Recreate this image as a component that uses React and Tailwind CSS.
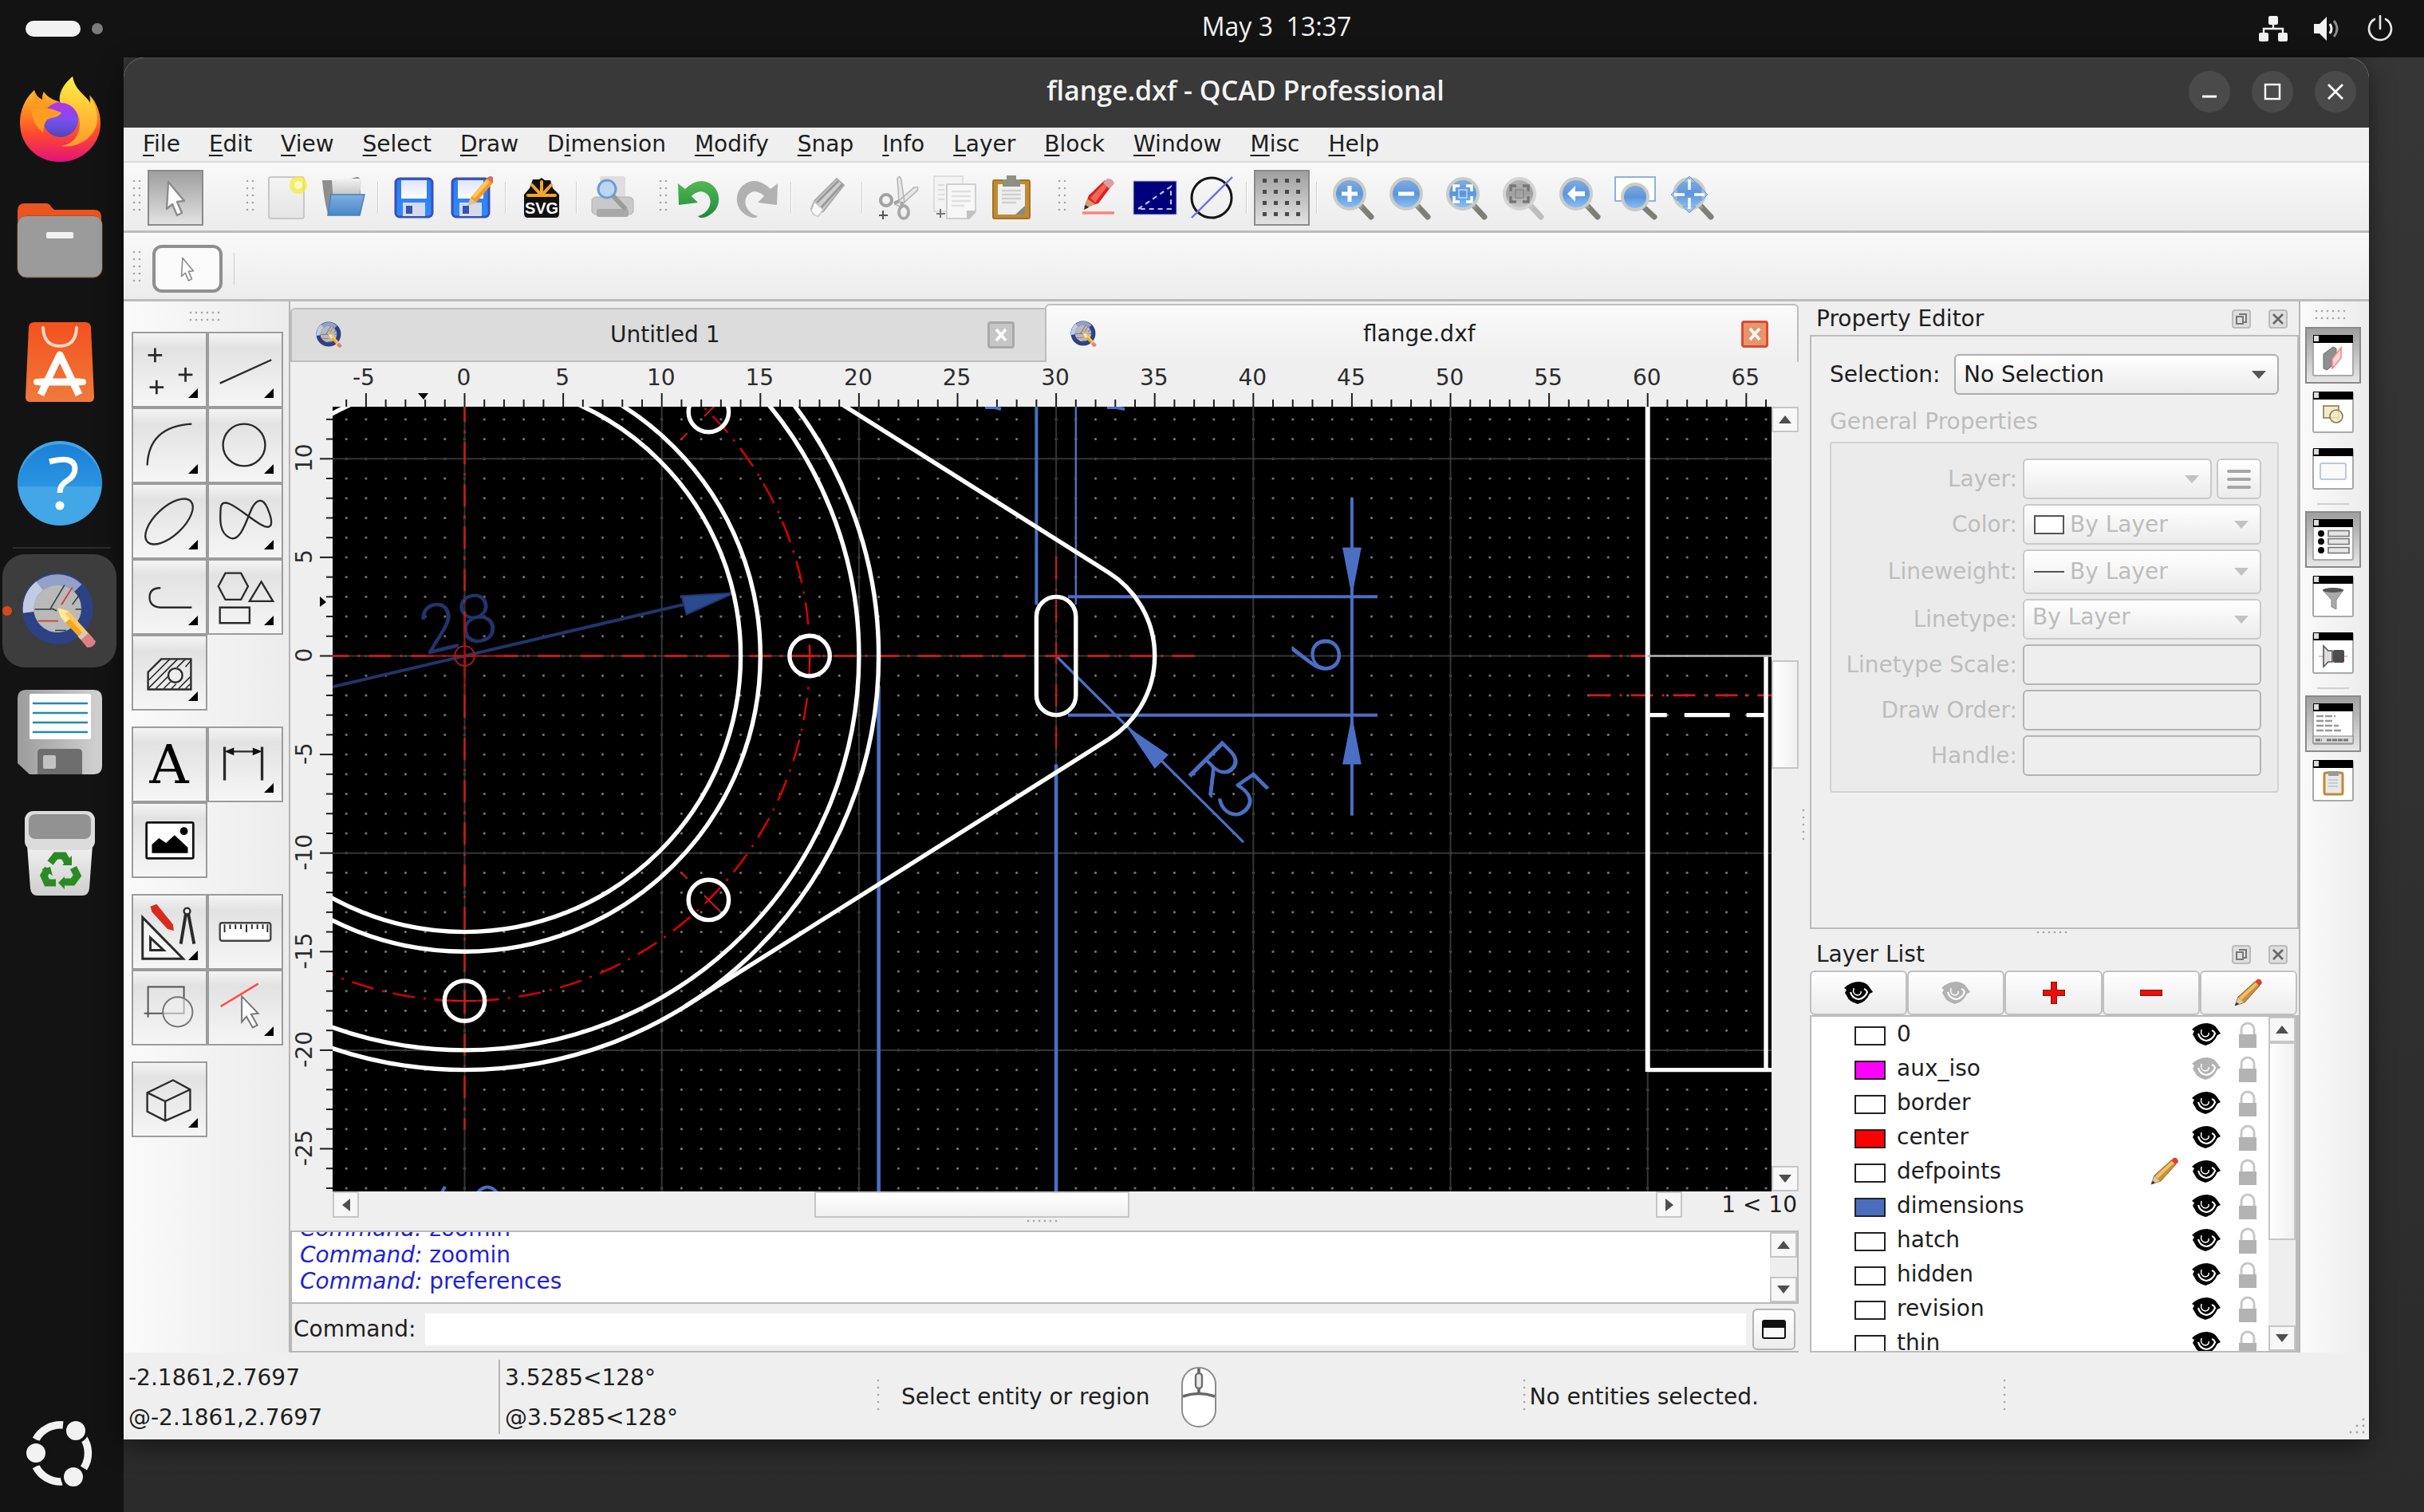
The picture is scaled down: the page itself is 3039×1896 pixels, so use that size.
import React from "react";

const FONT = "font-['DejaVu_Sans',sans-serif]";

/* ---------- shared bits ---------- */

function Grip({ vertical = true, cols = 2, rows = 5 }) {
  const w = vertical ? cols * 8 : rows * 8;
  const h = vertical ? rows * 10 : cols * 12;
  const nx = vertical ? cols : rows;
  const ny = vertical ? rows : cols;
  return (
    <svg width={w} height={h} className="shrink-0" aria-hidden="true">
      {Array.from({ length: nx * ny }, (_, i) => (
        <circle key={i} cx={3 + (i % nx) * 7} cy={4 + Math.floor(i / nx) * 9} r="1.3" fill="#a6a6a6" />
      ))}
    </svg>
  );
}

function Icon({ size = 56, box = 56, children, className = "" }) {
  return (
    <svg width={size} height={size} viewBox={`0 0 ${box} ${box}`} fill="none" className={className} aria-hidden="true">
      {children}
    </svg>
  );
}

function Gradients() {
  const lin = (id, stops, v = true) => (
    <linearGradient id={id} x1="0" y1="0" x2={v ? "0" : "1"} y2={v ? "1" : "0"}>
      {stops.map((s, i) => (
        <stop key={i} offset={i / (stops.length - 1)} stopColor={s} />
      ))}
    </linearGradient>
  );
  return (
    <svg width="0" height="0" className="absolute" aria-hidden="true">
      <defs>
        {lin("gPaper", ["#f4f4f4", "#e4e4e4"])}
        {lin("gFolder", ["#7fb0e0", "#4a86c8"])}
        {lin("gGrey", ["#f2f2f2", "#a8a8a8"])}
        {lin("gBlue", ["#2a7cf0", "#2f8bff"])}
        {lin("gLabel", ["#dfe4fb", "#ffffff"])}
        {lin("gLens", ["#86aee0", "#5b96dd", "#8fc2f7"])}
        {lin("gLensGrey", ["#b4b4b4", "#a0a0a0", "#cccccc"])}
        {lin("gUndo", ["#56b854", "#1c8a3c"])}
        {lin("gSoft", ["#f4511e", "#ef7a3c"])}
        {lin("gHelp", ["#1b80d8", "#2a95e2"])}
        {lin("gDisk", ["#9c9c9c", "#d2d2d2"], false)}
        {lin("gTrash", ["#f0f0f0", "#cfcfcf"])}
        {lin("gFox", ["#ffe14a", "#ff9a1f", "#ff4a2e", "#e3127b"])}
        {lin("gFox2", ["#fff04a", "#ffb52a"])}
        {lin("gPurple", ["#b833e1", "#7a4ff0", "#5045b8"])}
      </defs>
    </svg>
  );
}

/* ---------- top bar and dock ---------- */

function TopBar() {
  return (
    <header className="flex h-[72px] shrink-0 items-center justify-between bg-[#131313] pl-8 pr-[38px] text-[#f2f2f2]">
      <button aria-label="Workspaces" className="flex w-48 items-center gap-3.5">
        <span className="h-[20px] w-[69px] rounded-full bg-[#f2f2f2]" />
        <span className="size-3.5 rounded-full bg-[#7b7b7b]" />
      </button>
      <button className="whitespace-pre pb-1.5 pl-[168px] font-['Open_Sans',sans-serif] text-[32px] leading-none">May 3  13:37</button>
      <div className="flex w-48 items-center justify-end gap-[30px]">
        <svg width="38" height="34" viewBox="0 0 38 34" fill="#f2f2f2" role="img" aria-label="Network">
          <rect x="13" y="1" width="12" height="11" rx="2" />
          <rect x="1" y="22" width="12" height="11" rx="2" />
          <rect x="25" y="22" width="12" height="11" rx="2" />
          <path d="M19 10v7M7 23v-6h24v6" stroke="#f2f2f2" strokeWidth="2.4" fill="none" />
        </svg>
        <svg width="38" height="34" viewBox="0 0 38 34" fill="none" role="img" aria-label="Volume">
          <path d="M2 11h7l9-9v30l-9-9H2z" fill="#f2f2f2" />
          <path d="M22 11q4 6 0 12" stroke="#f2f2f2" strokeWidth="3" />
          <path d="M27 7q8 10 0 20" stroke="#8a8a8a" strokeWidth="3" />
        </svg>
        <svg width="34" height="34" viewBox="0 0 34 34" fill="none" stroke="#e6e6e6" strokeWidth="2.6" role="img" aria-label="Power">
          <path d="M17 1v16M10 5a14 14 0 1 0 14 0" strokeLinecap="round" />
        </svg>
      </div>
    </header>
  );
}

function QcadLogo({ size, className = "" }) {
  return (
    <svg width={size} height={size} viewBox="0 0 100 100" fill="none" className={className} aria-hidden="true">
      <circle cx="47" cy="47" r="38" fill="#b9b9b9" stroke="#2c4285" strokeWidth="15" />
      <path d="M10 47A37 37 0 0 1 73 21" stroke="#93a0c8" strokeWidth="14" />
      <path d="M10 52A37 37 0 0 1 24 18" stroke="#c2cbe2" strokeWidth="14" />
      <path d="M18 48h22M70 48h8M38 47l18-30M66 42l10-14M46 50l-6-3M44 75h14" stroke="#3a3a3a" strokeWidth="1.6" />
      <path d="M52 42l14-22M22 63h26" stroke="#d8392e" strokeWidth="1.8" />
      <path d="M47 46l14 4 32 36-9 8-33-36z" fill="#f7a51f" />
      <path d="M47 46l14 4 6 7-10 8-6-7z" fill="#fbe9a0" />
      <path d="M61 50l32 36-4 4-32-36z" fill="#ffc95c" />
      <path d="M85 78l11 11q-2 8-11 8l-9-11z" fill="#dd7f86" />
      <path d="M82 75l4 4-9 8-4-4z" fill="#d9cbb4" />
    </svg>
  );
}

function DockTile({ label, children, active }) {
  return (
    <li className="flex h-[152px] items-center justify-center">
      <button
        aria-label={label}
        className={
          active
            ? "relative mr-1.5 flex h-[142px] w-[143px] items-center justify-center rounded-[28px] bg-[#3d3d3d]"
            : "mr-1.5 flex h-[142px] w-[143px] items-center justify-center"
        }
      >
        {active && <span className="absolute left-0 size-3 rounded-full bg-[#d9481c]" />}
        {children}
      </button>
    </li>
  );
}

function Dock() {
  return (
    <nav aria-label="Dock" className="flex w-[155px] shrink-0 flex-col justify-between bg-[#131313] pb-[30px] pt-0.5">
      <ul>
        <DockTile label="Firefox">
          <svg width="104" height="108" viewBox="0 0 104 108" aria-hidden="true">
            <path d="M68 0c-14 12-16 22-16 32-8-3-16-6-20-13-2 4-2 7-2 10-6-3-9-8-10-12C8 28 2 42 2 58c0 28 22 49 50 49s51-21 51-49c0-14-6-27-13-34 1 5 1 7 1 10C84 22 71 18 68 0z" fill="url(#gFox)" />
            <circle cx="53" cy="54" r="22" fill="url(#gPurple)" />
            <path d="M68 0c-17 14-18 28-15 33 14 0 24 12 24 26 0 18-12 27-24 28 22 4 46-12 46-34 0-16-7-24-10-30 1 5 1 8 1 11C84 22 71 18 68 0z" fill="url(#gFox2)" opacity=".8" />
            <path d="M16 40c8-2 14 2 20 0 6 0 12 3 18 5-2 5-8 6-13 7-8 1-9 10-10 18-8-6-14-16-15-30z" fill="#ff9d22" />
            <path d="M20 17c-2 12 0 20 12 24l4-12c-2 0-4-4-4-10-1 3-2 6-2 10-5-2-9-7-10-12z" fill="#ff9d22" />
          </svg>
        </DockTile>
        <DockTile label="Files">
          <svg width="108" height="96" viewBox="0 0 108 96" aria-hidden="true">
            <path d="M10 1h27q4 0 6 4l4 4h50q9 0 9 9v64H1V10q0-9 9-9z" fill="#e9541f" />
            <rect x="1" y="17" width="106" height="77" rx="11" fill="#999" stroke="#7c4a3a" strokeWidth="1" />
            <rect x="1" y="17" width="106" height="75" rx="11" fill="#9b9b9b" />
            <rect x="37" y="37" width="34" height="8" rx="2" fill="#f2f2f2" />
          </svg>
        </DockTile>
        <DockTile label="App Center">
          <svg width="88" height="102" viewBox="0 0 88 102" fill="none" aria-hidden="true">
            <path d="M12 1h64q6 0 7 6l4 88q0 6-6 6H7q-6 0-6-6L5 7q1-6 7-6z" fill="url(#gSoft)" />
            <path d="M23 8q1 23 21 23t21-23" stroke="#ffd9cc" strokeWidth="4" strokeLinecap="round" />
            <path d="M20 92l24-50 24 50M18 76h52" stroke="#fff" strokeWidth="9" strokeLinejoin="round" />
            <path d="M15 76h58" stroke="#fff" strokeWidth="8" strokeLinecap="round" />
          </svg>
        </DockTile>
        <DockTile label="Help">
          <svg width="108" height="108" viewBox="0 0 108 108" aria-hidden="true">
            <circle cx="54" cy="54" r="53" fill="#43a6e6" />
            <path d="M1 58a53 53 0 1 1 106 0z" fill="url(#gHelp)" />
            <path d="M41 27q31-8 32 8 0 10-10 16-9 5-9 15" stroke="#fff" strokeWidth="7" fill="none" />
            <circle cx="54" cy="82" r="5.5" fill="#fff" />
          </svg>
        </DockTile>
        <li aria-hidden="true" className="mx-4 mb-0.5 h-1.5 border-b-2 border-[#2c2c2c]" />
        <DockTile label="QCAD" active>
          <QcadLogo size={98} />
        </DockTile>
        <DockTile label="Disk">
          <svg width="108" height="108" viewBox="0 0 108 108" aria-hidden="true">
            <path d="M12 1h84q11 0 11 11v84q0 11-11 11H16L1 93V12Q1 1 12 1z" fill="url(#gDisk)" />
            <rect x="16" y="6" width="77" height="57" rx="2" fill="#fff" />
            <path d="M21 18h67M21 30h67M21 42h67M21 54h67" stroke="#2488b4" strokeWidth="2.6" strokeLinecap="round" />
            <path d="M26 107V80q0-5 5-5h46q5 0 5 5v27z" fill="#6e6e6e" />
            <rect x="33" y="83" width="16" height="17" rx="2" fill="#c2c2c2" />
          </svg>
        </DockTile>
        <DockTile label="Trash">
          <svg width="90" height="108" viewBox="0 0 90 108" aria-hidden="true">
            <path d="M4 44h82l-4 54q-1 9-9 9H17q-8 0-9-9z" fill="url(#gTrash)" />
            <rect x="1" y="1" width="88" height="49" rx="11" fill="#dcdcdc" />
            <rect x="6" y="5" width="78" height="31" rx="8" fill="#929292" />
            <g fill="none" stroke="#2b8a24" strokeWidth="9">
              <path d="M33 66l7-9h10l5 9" />
              <path d="M62 72l5 10-6 8h-10" />
              <path d="M40 91H29l-4-9 5-9" />
            </g>
            <path d="M60 57v12H48zM51 83v16l-8-8zM22 74l11-3 3 11z" fill="#2b8a24" />
          </svg>
        </DockTile>
      </ul>
      <button aria-label="Show Applications" className="mr-1.5 flex justify-center">
        <svg width="88" height="88" viewBox="0 0 88 88" fill="none" aria-hidden="true">
          <g stroke="#f2f2f2" strokeWidth="9.5">
            <path d="M14 27A35 35 0 0 1 48 9" />
            <path d="M73 24A35 35 0 0 1 74 63" />
            <path d="M47 80A35 35 0 0 1 14 61" />
          </g>
          <g fill="#f2f2f2" stroke="#131313" strokeWidth="4">
            <circle cx="14" cy="44" r="14" />
            <circle cx="64" cy="16" r="14" />
            <circle cx="61" cy="74" r="14" />
          </g>
        </svg>
      </button>
    </nav>
  );
}

/* ---------- window chrome ---------- */

function TitleBar() {
  const btn = "flex size-[52px] items-center justify-center rounded-full bg-[#4a4a4a]";
  return (
    <div className="flex h-[88px] shrink-0 items-center rounded-t-[26px] border-t-2 border-[#414141] bg-[#393939] pb-1 pr-4">
      <h1 className="flex-1 pb-1 pl-[224px] text-center font-['Open_Sans',sans-serif] text-[34px] font-semibold leading-none text-[#f4f4f4]">
        flange.dxf - QCAD Professional
      </h1>
      <div className="flex gap-[27px]">
        <button aria-label="Minimize" className={btn}>
          <Icon size={24} box={24}><path d="M3 18h18" stroke="#fff" strokeWidth="3" /></Icon>
        </button>
        <button aria-label="Maximize" className={btn}>
          <Icon size={24} box={24}><rect x="3" y="3" width="18" height="18" stroke="#fff" strokeWidth="2.4" /></Icon>
        </button>
        <button aria-label="Close" className={btn}>
          <Icon size={24} box={24}><path d="M3 3l18 18M21 3L3 21" stroke="#fff" strokeWidth="2.8" /></Icon>
        </button>
      </div>
    </div>
  );
}

const MENUS = [
  ["", "F", "ile"], ["", "E", "dit"], ["", "V", "iew"], ["", "S", "elect"], ["", "D", "raw"], ["D", "i", "mension"],
  ["", "M", "odify"], ["", "S", "nap"], ["", "I", "nfo"], ["", "L", "ayer"], ["", "B", "lock"], ["", "W", "indow"],
  ["", "M", "isc"], ["", "H", "elp"],
];

function MenuBar() {
  return (
    <nav aria-label="Menu" className="flex h-[44px] shrink-0 items-center gap-9 border-b-2 border-[#dadada] bg-[#efefef] px-6">
      {MENUS.map(([a, u, b], i) => (
        <button key={i} className="leading-none">
          {a}
          <span className="underline decoration-2 underline-offset-4">{u}</span>
          {b}
        </button>
      ))}
    </nav>
  );
}

/* ---------- toolbar icons ---------- */

const Pointer = ({ size = 56 }) => (
  <Icon size={size}>
    <path d="M19 8l20 24-9 1 6 14-6 3-6-14-7 6z" fill="#fdfdfd" stroke="#8c8c8c" strokeWidth="2.4" strokeLinejoin="round" />
  </Icon>
);

const Disk = ({ pencil }) => (
  <Icon>
    <rect x="5" y="4" width="46" height="48" rx="5" fill="url(#gBlue)" stroke="#3b4fb4" strokeWidth="3" />
    <rect x="12" y="6" width="32" height="23" fill="url(#gLabel)" />
    <path d="M14 34h28v17H14z" fill="#d5dbe8" />
    <rect x="18" y="38" width="8" height="10" fill="#3b4fb4" />
    {pencil && (
      <>
        <path d="M24 38l4-10 22-26 7 6-22 26z" fill="#f79a1c" />
        <path d="M30 26L48 5l4 3-19 21z" fill="#ffc55c" />
        <path d="M24 38l4-10 7 6z" fill="#d8c4a0" />
        <path d="M50 2q4-3 8 2l-3 5-6-5z" fill="#d96b5a" />
      </>
    )}
  </Icon>
);

const Lens = ({ grey, children }) => (
  <Icon>
    <path d="M38 38l13 14" stroke={grey ? "#bdbdbd" : "#7e8078"} strokeWidth="7" strokeLinecap="round" />
    <path d="M34 34l6 7" stroke={grey ? "#c6c6c6" : "#9a9c94"} strokeWidth="4" />
    <circle cx="24" cy="23" r="19" fill={grey ? "url(#gLensGrey)" : "url(#gLens)"} stroke={grey ? "#d4d4d4" : "#c9cdc6"} strokeWidth="4" />
    <g stroke={grey ? "#777" : "#fff"} strokeWidth="4">{children}</g>
  </Icon>
);

const Brackets = () => (
  <>
    <path d="M13 20v-7h7M28 13h7v7M35 26v7h-7M20 33h-7v-7" strokeWidth="3.4" />
    <rect x="19" y="18" width="10" height="10" strokeWidth="1.5" opacity=".6" />
  </>
);

const Clipboard = () => (
  <Icon>
    <rect x="5" y="6" width="46" height="48" rx="2" fill="#c08a38" stroke="#a8721e" strokeWidth="2" />
    <path d="M11 11h34v30l-8 8H11z" fill="#f0f0f0" />
    <path d="M16 19h24M16 24h24M16 29h24M16 34h18" stroke="#cfcfcf" strokeWidth="2.4" />
    <path d="M45 38v11H33z" fill="#8a8a80" />
    <path d="M17 5h5V0h12v5h5v9H17z" fill="#8d9184" />
  </Icon>
);

const RedPencil = () => (
  <Icon>
    <path d="M10 40l6-15L36 6l8 8-16 21z" fill="#e0201c" />
    <path d="M18 28L38 7l4 3-18 24z" fill="#f2665c" />
    <path d="M34 9l5-5q7-1 9 6l-6 7z" fill="#d9a0a0" />
    <path d="M10 43l4-14 10 7z" fill="#c9a070" />
    <path d="M10 43l2-6 4 3z" fill="#222" />
    <path d="M8 47h40" stroke="#ff8080" strokeWidth="3.5" />
  </Icon>
);

const Arrowed = ({ flip, color }) => (
  <Icon className={flip ? "-scale-x-100" : ""}>
    <path d="M1 10l9 7Q28 0 44 12c12 10 12 32-8 40-4 2-9 1-10-1 12-3 20-16 13-26-6-8-16-5-21 1l8 8-24 3z" fill={color} />
  </Icon>
);

function Separator() {
  return <span aria-hidden="true" className="mx-2 h-10 w-0.5 shrink-0 border-r border-white bg-[#cfcfcf]" />;
}

function Tool({ label, children, on }) {
  return (
    <button
      aria-label={label}
      aria-pressed={on ? true : undefined}
      className={
        on
          ? "flex h-[70px] w-[70px] shrink-0 items-center justify-center border-2 border-[#8a8a8a] bg-linear-to-b from-[#9f9f9f] to-[#e2e2e2]"
          : "flex h-[70px] w-[71px] shrink-0 items-center justify-center"
      }
    >
      {children}
    </button>
  );
}

function MainToolbar() {
  return (
    <div role="toolbar" aria-label="Main" className="flex h-[88px] shrink-0 items-center border-b-3 border-[#bcbcbc] bg-linear-to-b from-[#f9f9f9] to-[#ececec] pl-2.5 pt-0.5">
      <Grip />
      <span className="w-1" />
      <Tool label="Selection" on><Pointer /></Tool>
      <span className="w-[52px]" />
      <Grip />
      <Tool label="New">
        <Icon>
          <rect x="6" y="2" width="44" height="52" rx="3" fill="url(#gPaper)" stroke="#c8c8c8" strokeWidth="2" />
          <circle cx="43" cy="12" r="11" fill="#f4ec3a" opacity=".75" />
          <circle cx="43" cy="12" r="5" fill="#fbfbc8" />
        </Icon>
      </Tool>
      <Tool label="Open">
        <Icon>
          <path d="M2 6h12l3 4 28-8q6 0 5 8v38H9Q4 30 2 6z" fill="#8e8e8e" />
          <path d="M14 4h34q4 0 3 6l-4 28H16z" fill="url(#gGrey)" />
          <path d="M13 24h42l-6 26H9z" fill="url(#gFolder)" stroke="#4a7fb8" strokeWidth="1.5" />
        </Icon>
      </Tool>
      <Separator />
      <Tool label="Save"><Disk /></Tool>
      <Tool label="Save As"><Disk pencil /></Tool>
      <Separator />
      <Tool label="SVG Export">
        <svg width="46" height="50" viewBox="0 0 46 50" aria-hidden="true">
          <path d="M12 2h8l3-2 4 3h7l3 10 8 8v24q0 5-5 5H6q-5 0-5-5V21l7-8z" fill="#111" />
          <g stroke="#f7a42a" strokeWidth="4" strokeLinecap="round">
            <path d="M23 22V5M23 22L11 9M23 22L35 9M23 22H6M23 22h17" />
          </g>
          <text x="23" y="45" textAnchor="middle" fill="#fff" fontFamily="Liberation Sans Narrow, Liberation Sans, sans-serif" fontWeight="700" fontSize="20">SVG</text>
        </svg>
      </Tool>
      <Separator />
      <Tool label="Print Preview">
        <Icon>
          <path d="M12 4q0-3 3-3h26q3 0 3 3v26H12z" fill="#dedede" />
          <rect x="2" y="27" width="52" height="22" rx="5" fill="#c9c9c9" stroke="#b0b0b0" />
          <rect x="8" y="42" width="40" height="10" rx="3" fill="#a9a9a9" />
          <path d="M27 24l16 17" stroke="#9c9c9c" strokeWidth="6" strokeLinecap="round" />
          <circle cx="21" cy="17" r="11" fill="#bcd6f2" stroke="#6f9cd2" strokeWidth="3" />
        </Icon>
      </Tool>
      <span className="w-[22px]" />
      <Grip />
      <Tool label="Undo"><Arrowed color="url(#gUndo)" /></Tool>
      <Tool label="Redo"><Arrowed flip color="#b1b1b1" /></Tool>
      <Separator />
      <Tool label="Delete">
        <Icon>
          <path d="M12 32L40 4l9 8-26 33-11 3-4-6z" fill="#cfcfcf" stroke="#aaa" strokeWidth="2" />
          <path d="M15 34L42 7M20 41L47 11" stroke="#9a9a9a" strokeWidth="3" />
          <path d="M12 33l11 10-6 8q-6 0-9-7z" fill="#fafafa" stroke="#c4c4c4" strokeWidth="1.5" />
        </Icon>
      </Tool>
      <Separator />
      <Tool label="Cut">
        <Icon>
          <path d="M29 33L27 4q3-6 5 2l4 28zM24 36l24-21q7-2 4 4L30 39z" fill="#e6e6e6" stroke="#b4b4b4" strokeWidth="1.5" />
          <path d="M29 32l-6 3M32 34l2 6" stroke="#a2a2a2" strokeWidth="4" />
          <circle cx="13" cy="31" r="7" stroke="#a2a2a2" strokeWidth="4" />
          <ellipse cx="35" cy="46" rx="6" ry="8" stroke="#a8a8a8" strokeWidth="4" />
          <path d="M4 50h11M9 44v11" stroke="#555" strokeWidth="2" />
        </Icon>
      </Tool>
      <Tool label="Copy">
        <Icon>
          <rect x="2" y="1" width="36" height="44" fill="#f3f3f3" stroke="#d8d8d8" strokeWidth="1.5" />
          <path d="M7 12h8M7 18h8M7 24h8M7 30h8" stroke="#ddd" strokeWidth="2" />
          <path d="M18 11h36v34l-9 9H18z" fill="#f7f7f7" stroke="#cfcfcf" strokeWidth="2" />
          <path d="M24 20h24M24 26h24M24 32h24M24 38h16" stroke="#dfdfdf" strokeWidth="2.4" />
          <path d="M54 44v3l-8 8h-3V44z" fill="#c2c2c2" />
          <path d="M5 48h11M10 42v11" stroke="#777" strokeWidth="2" />
        </Icon>
      </Tool>
      <Tool label="Paste"><Clipboard /></Tool>
      <span className="w-[22px]" />
      <Grip />
      <Tool label="Edit"><RedPencil /></Tool>
      <Tool label="Rectangle">
        <Icon>
          <rect x="1" y="7" width="54" height="42" fill="#00007c" stroke="#b9b9c9" />
          <path d="M7 42L48 14v28z" stroke="#c4c4dd" strokeWidth="2.2" strokeDasharray="6 5" />
        </Icon>
      </Tool>
      <Tool label="Circle">
        <Icon>
          <circle cx="28" cy="28" r="25" stroke="#151515" strokeWidth="3" />
          <path d="M3 53L54 2" stroke="#6a6af5" strokeWidth="2.4" />
        </Icon>
      </Tool>
      <Separator />
      <Tool label="Grid" on>
        <Icon>
          {Array.from({ length: 16 }, (_, i) => (
            <rect key={i} x={4 + (i % 4) * 14} y={4 + Math.floor(i / 4) * 14} width="5" height="5" fill="#4a4a4a" />
          ))}
        </Icon>
      </Tool>
      <Separator />
      <Tool label="Zoom In"><Lens><path d="M14 23h20M24 13v20" strokeWidth="5" /></Lens></Tool>
      <Tool label="Zoom Out"><Lens><path d="M14 23h20" strokeWidth="5" /></Lens></Tool>
      <Tool label="Auto Zoom"><Lens><Brackets /></Lens></Tool>
      <Tool label="Zoom to Selection"><Lens grey><Brackets /></Lens></Tool>
      <Tool label="Previous View"><Lens><path d="M23 13L13 23l10 10v-7h12v-6H23z" fill="#fff" strokeWidth="0" /></Lens></Tool>
      <Tool label="Window Zoom">
        <Icon>
          <rect x="2" y="2" width="50" height="30" fill="#fff" stroke="#8fb2dc" strokeWidth="2" />
          <path d="M38 40l13 12" stroke="#7e8078" strokeWidth="7" strokeLinecap="round" />
          <circle cx="27" cy="27" r="16" fill="url(#gLens)" stroke="#c9cdc6" strokeWidth="4" />
        </Icon>
      </Tool>
      <Tool label="Pan Zoom">
        <Lens>
          <path d="M24 1l8 8H16zM24 47l8-8H16zM1 24l8-8v16zM47 24l-8-8v16z" fill="#9cc0ee" stroke="#6c9bd8" strokeWidth="1" />
          <path d="M24 5v13M24 28v14M5 24h13M30 24h13" strokeWidth="3.4" />
        </Lens>
      </Tool>
    </div>
  );
}

function OptionsToolbar() {
  return (
    <div role="toolbar" aria-label="Options" className="flex h-[86px] shrink-0 items-center border-b-3 border-[#bcbcbc] bg-linear-to-b from-[#f9f9f9] to-[#ececec] pl-2.5 pt-1.5">
      <Grip />
      <button aria-label="Reset" className="ml-2.5 flex h-[60px] w-[88px] items-center justify-center rounded-xl border-4 border-[#8f8f8f] bg-[#fbfbfb]">
        <Pointer size={38} />
      </button>
      <span className="mx-3.5 h-10 w-px bg-[#cfcfcf]" />
    </div>
  );
}

/* ---------- CAD tool palette ---------- */

const S = { stroke: "#2a2a2a", strokeWidth: 2.4 };
const Cube = () => <path d="M18 38l33-16 22 12v26L41 74 18 62zM18 38l23 11 32-15M41 49v25" {...S} />;

const PALETTE = [
  [
    { l: "Points", d: <path d="M28 19v18M19 28h18M67 44v18M58 53h18M30 60v18M21 69h18" {...S} strokeWidth="2.8" />, m: true },
    { l: "Line", d: <path d="M14 64L80 34" {...S} />, m: true },
    { l: "Arc", d: <path d="M18 72Q20 22 75 19" {...S} />, m: true },
    { l: "Circle", d: <circle cx="45" cy="46" r="27" {...S} />, m: true },
    { l: "Ellipse", d: <ellipse cx="46" cy="47" rx="38" ry="18" transform="rotate(-43 46 47)" {...S} />, m: true },
    { l: "Spline", d: <path d="M15 30c2-20 30 8 50 20s16-6 10-20-14-12-20 0-14 44-28 38S14 44 15 30z" {...S} />, m: true },
    { l: "Polyline", d: <path d="M35 35Q21 35 21 47T35 60H75" {...S} />, m: true },
    { l: "Shapes", d: <path d="M12 33l9-17h20l9 17-9 17H21zM67 27l15 25H52zM14 60h38v20H14z" {...S} />, m: true },
    {
      l: "Hatch",
      d: (
        <>
          <path d="M19 68V46l17-17h38v39z" {...S} />
          <path d="M20 56l27-27M20 66l37-37M29 67l16-16M39 67l9-9M49 67l6-6M58 67l15-15M67 67l6-6M56 40l11-11M67 39l7-8" {...S} strokeWidth="1.6" />
          <circle cx="54" cy="50" r="9" {...S} fill="#eee" />
        </>
      ),
      m: true,
    },
  ],
  [
    { l: "Text", t: "A" },
    {
      l: "Dimension",
      d: (
        <>
          <path d="M20 24v43M68 24v43" {...S} strokeWidth="3.4" />
          <path d="M24 30h40" {...S} />
          <path d="M20 30l12-5v10zM68 30l-12-5v10z" fill="#111" />
        </>
      ),
      m: true,
    },
    {
      l: "Image",
      d: (
        <>
          <rect x="17" y="24" width="60" height="46" rx="2" fill="#fff" stroke="#111" strokeWidth="2.8" />
          <path d="M24 63V52l9-8 9 6 11-10 17 16v7z" fill="#000" />
          <circle cx="65" cy="35" r="5" fill="#000" />
        </>
      ),
    },
  ],
  [
    {
      l: "Modify",
      d: (
        <>
          <path d="M12 28v53h52zM22 54v16h17z" {...S} strokeWidth="3" fill="#f6f6f6" />
          <path d="M22 14l8-3 21 26 1 8-8-2-20-22z" fill="#d92a1c" />
          <path d="M68 20L61 62M70 20l8 42" {...S} strokeWidth="4" />
          <circle cx="69" cy="20" r="4" {...S} fill="#eee" />
        </>
      ),
      m: true,
    },
    {
      l: "Measure",
      d: (
        <>
          <rect x="14" y="35" width="65" height="23" rx="3" fill="#fff" stroke="#444" strokeWidth="2.4" />
          <path d="M20 37v10M27 37v6M34 37v6M41 37v6M48 37v10M55 37v6M62 37v6M69 37v6M75 37v10" {...S} strokeWidth="2" />
        </>
      ),
    },
    {
      l: "Block",
      d: (
        <>
          <path d="M14 54h51V20H19v39" stroke="#555" strokeWidth="2" />
          <circle cx="57" cy="52" r="19" stroke="#777" strokeWidth="2" fill="#eee" fillOpacity=".6" />
        </>
      ),
    },
    {
      l: "Select",
      d: (
        <>
          <path d="M15 45l48-29" stroke="#ff4a4a" strokeWidth="2.6" />
          <path d="M42 32l21 22-9 1 8 14-6 3-8-14-6 7z" fill="#fff" stroke="#777" strokeWidth="2" />
        </>
      ),
      m: true,
    },
  ],
  [{ l: "Projection", d: <Cube />, m: true }],
];

function Palette() {
  return (
    <aside aria-label="CAD tools" className="flex w-[209px] shrink-0 flex-col items-center border-r-2 border-[#b5b5b5] bg-linear-to-r from-[#fafafa] to-[#ececec] pl-0.5 pt-2.5">
      <Grip vertical={false} rows={6} />
      <div className="mt-1 flex flex-col gap-5">
        {PALETTE.map((group, g) => (
          <div key={g} className="grid grid-cols-[95px_95px]">
            {group.map((t) => (
              <button
                key={t.l}
                aria-label={t.l}
                className="relative flex size-[95px] items-center justify-center border-2 border-[#9c9c9c] bg-linear-to-b from-[#f4f4f4] via-[#e2e2e2] via-20% to-[#f6f6f6]"
              >
                {t.t ? (
                  <span className="font-['DejaVu_Serif',serif] text-[68px] leading-none text-black">{t.t}</span>
                ) : (
                  <Icon size={91} box={93}>{t.d}</Icon>
                )}
                {t.m && (
                  <svg width="12" height="12" viewBox="0 0 12 12" className="absolute bottom-2.5 right-2.5" aria-hidden="true">
                    <path d="M12 0v12H0z" fill="#000" />
                  </svg>
                )}
              </button>
            ))}
          </div>
        ))}
      </div>
    </aside>
  );
}

/* ---------- drawing area ---------- */

const U = 24.72;
const OX = 165.5;
const OY = 312.5;
const X = (u) => OX + u * U;
const Y = (u) => OY - u * U;
const RED = "#d81818";
const BLUE = "#4a6fc4";

function range(a, b, step = 1) {
  const out = [];
  for (let i = a; i <= b; i += step) out.push(i);
  return out;
}

function Drawing() {
  const line = (x1, y1, x2, y2, props) => <line x1={X(x1)} y1={Y(y1)} x2={X(x2)} y2={Y(y2)} {...props} />;
  const dash = "28 11 3 11";
  const c = Math.SQRT1_2 * 17.5;
  const tx = 21 * 0.5333;
  const ty = 21 * 0.8459;
  const ex = 30 + 5 * 0.5333;
  const ey = 5 * 0.8459;
  const cad = { fontFamily: "Lato, sans-serif", fontWeight: 300, fontSize: 84, strokeWidth: 1 };
  return (
    <svg className="block h-full w-full bg-black" role="img" aria-label="flange.dxf">
      <defs>
        <pattern id="dots" x={OX - U / 2} y={OY - U / 2} width={U} height={U} patternUnits="userSpaceOnUse">
          <circle cx={U / 2} cy={U / 2} r="1.5" fill="#858585" />
        </pattern>
      </defs>
      <rect width="100%" height="100%" fill="url(#dots)" />
      <g stroke="#363636" strokeWidth="2">
        {range(0, 60, 10).map((v) => <line key={v} x1={X(v)} x2={X(v)} y1="0" y2="100%" />)}
        {range(-20, 10, 10).map((v) => <line key={v} x1="0" x2="100%" y1={Y(v)} y2={Y(v)} />)}
      </g>

      <g stroke={BLUE} fill="none">
        {line(29, 14, 29, 2.6, { strokeWidth: 4 })}
        {line(31, 14, 31, 2.6, { strokeWidth: 2.5 })}
        {line(30.6, 3, 46.3, 3, { strokeWidth: 4 })}
        {line(30.6, -3, 46.3, -3, { strokeWidth: 4 })}
        {line(45, 8, 45, -8.1, { strokeWidth: 4 })}
        {line(21, -1.5, 21, -30, { strokeWidth: 4.6 })}
        {line(30, -5.5, 30, -30, { strokeWidth: 4.6 })}
        {line(30, 0, 39.5, -9.45, { strokeWidth: 3.2 })}
        <path d="M818 1h12l8 2M971 1h12l10 2" strokeWidth="4" />
        <path d="M137 985l4-7M182 985q12-13 24 0" strokeWidth="4" />
      </g>
      <g fill={BLUE}>
        <path d={`M${X(45)} ${Y(3)}L${X(45.48)} ${Y(5.5)}H${X(44.52)}Z`} />
        <path d={`M${X(45)} ${Y(-3)}L${X(45.48)} ${Y(-5.5)}H${X(44.52)}Z`} />
        <path d={`M${X(33.54)} ${Y(-3.54)}L${X(35.7)} ${Y(-5.02)}L${X(35)} ${Y(-5.72)}Z`} />
        <g stroke={BLUE}>
          <text transform="translate(1067 455) rotate(45)" {...cad}>R5</text>
          <text transform="translate(1263 336) rotate(-90)" {...cad}>6</text>
        </g>
      </g>

      <g stroke="#22356b" strokeWidth="4">
        {line(-7, -1.64, 13.6, 3.19)}
        <path d={`M${X(13.7)} ${Y(3.2)}L${X(11)} ${Y(3.05)}L${X(11.25)} ${Y(2.1)}Z`} fill="#2c4a8f" strokeWidth="2" />
      </g>
      <text transform="translate(116 311) rotate(-13.2)" fill="#22356b" stroke="#22356b" {...cad}>28</text>

      <g stroke={RED} strokeWidth="2" fill="none">
        <circle cx={OX} cy={OY} r={17.5 * U} strokeDasharray={dash} strokeWidth="2.4" stroke="#e00000" />
        {line(-7, 0, 37, 0, { strokeWidth: 3, strokeDasharray: dash, stroke: "#c01c1c" })}
        {line(57, 0, 60, 0, { strokeWidth: 3, strokeDasharray: dash })}
        {line(0, 13, 0, -24, { strokeDasharray: dash, strokeWidth: 2.6, stroke: "#c01c1c" })}
        {line(30, 5, 30, -5, { strokeDasharray: dash })}
        {line(57, -2, 67, -2, { strokeDasharray: dash, strokeWidth: 2.8 })}
        {line(-2, 0, 2, 0, { stroke: "#9c1212" })}
        {line(0, 2, 0, -2, { stroke: "#9c1212" })}
        <circle cx={X(0)} cy={Y(0)} r={U / 2} stroke="#9c1c1c" />
        {line(17.5, 0.5, 17.5, -0.5)}
        {line(17, 0, 18, 0)}
        {line(-0.6, -17.5, 0.6, -17.5)}
        {line(10.95, -10.95, 13.8, -13.8, { strokeDasharray: "12 30 28 30" })}
        {line(10.95, 10.95, 13.8, 13.8, { strokeDasharray: "12 30 28 30" })}
      </g>

      <g stroke="#fff" strokeWidth="5.4" fill="none">
        {[14, 15, 20, 21].map((r) => <circle key={r} cx={OX} cy={OY} r={r * U} />)}
        {[[17.5, 0], [c, c], [c, -c], [0, -17.5]].map(([x, y], i) => (
          <circle key={i} cx={X(x)} cy={Y(y)} r={U * 1.02} />
        ))}
        <path d={`M${X(tx)} ${Y(ty)}L${X(ex)} ${Y(ey)}A${5 * U} ${5 * U} 0 0 1 ${X(ex)} ${Y(-ey)}L${X(tx)} ${Y(-ty)}`} />
        <rect x={X(29)} y={Y(3)} width={2 * U} height={6 * U} rx={U} />
        {line(60, 14, 60, -21.1, { strokeWidth: 6 })}
        {line(66, 0, 66, -21)}
        {line(60, -21, 70, -21)}
        {line(60, 0, 70, 0, { strokeWidth: 2.6, stroke: "#b4b4b4" })}
        {line(60, -3, 66, -3, { strokeDasharray: "24 22 57 21" })}
      </g>
    </svg>
  );
}

const rulerText = { fontFamily: "DejaVu Sans, sans-serif", fontSize: 28, textAnchor: "middle", fill: "#2c2c2c" };

function TopRuler() {
  return (
    <svg className="block h-full w-full" role="img" aria-label="Horizontal ruler">
      {range(-6, 66).map((v) => (
        <line key={v} x1={X(v)} x2={X(v)} y1={v % 5 ? 47 : 39} y2="56" stroke="#1c1c1c" strokeWidth="2" />
      ))}
      {range(-5, 65, 5).map((v) => (
        <text key={v} x={X(v) - (v < 0 ? 3 : 1)} y="29" {...rulerText}>{v}</text>
      ))}
      <path d="M107 39h13l-6 8z" fill="#000" />
    </svg>
  );
}

function SideRuler() {
  return (
    <svg className="block h-full w-full" role="img" aria-label="Vertical ruler">
      {range(-27, 12).map((v) => (
        <line key={v} y1={Y(v)} y2={Y(v)} x1={v % 5 ? 45 : 37} x2="53" stroke="#1c1c1c" strokeWidth="2" />
      ))}
      {range(-25, 10, 5).map((v) => (
        <text key={v} transform={`translate(27 ${Y(v) - 1}) rotate(-90)`} {...rulerText}>{v}</text>
      ))}
      <path d="M37 238v13l8-6z" fill="#000" />
    </svg>
  );
}

const scrollBtn = "flex shrink-0 items-center justify-center border-2 border-[#c6c6c6] bg-[#f7f7f7]";
const ARROWS = { up: "M8 3l8 10H0z", down: "M8 13L0 3h16z", left: "M3 8l10-8v16z", right: "M13 8L3 0v16z" };

function ScrollArrow({ dir, className }) {
  return (
    <button aria-label={`Scroll ${dir}`} className={`${scrollBtn} ${className}`}>
      <Icon size={16} box={16}><path d={ARROWS[dir]} fill="#4f4f4f" /></Icon>
    </button>
  );
}

function TabClose({ active }) {
  return (
    <button
      aria-label="Close tab"
      className={
        active
          ? "flex size-[34px] items-center justify-center rounded-sm border-3 border-[#dc4a36] bg-[#e8956c]"
          : "flex size-[34px] items-center justify-center rounded-sm border-3 border-[#a8a8a8] bg-[#c6c6c6]"
      }
    >
      <Icon size={18} box={18}><path d="M3 2l12 14M15 2L3 16" stroke="#fff" strokeWidth="3.6" /></Icon>
    </button>
  );
}

function Tabs() {
  return (
    <div role="tablist" className="flex h-[76px] shrink-0 items-end pt-[3px]">
      <div className="flex h-[68px] flex-1 items-center rounded-tl-md border-2 border-r-0 border-[#bdbdbd] bg-[#dcdcdc] pl-[30px] pr-[38px]">
        <QcadLogo size={34} />
        <button role="tab" aria-selected="false" className="flex-1">Untitled 1</button>
        <TabClose />
      </div>
      <div className="flex h-[73px] flex-1 items-center rounded-t-md border-2 border-b-0 border-[#bdbdbd] bg-linear-to-b from-[#fafafa] to-[#efefef] pl-[30px] pr-9">
        <QcadLogo size={34} />
        <button role="tab" aria-selected="true" className="flex-1">flange.dxf</button>
        <TabClose active />
      </div>
    </div>
  );
}

function Center() {
  return (
    <main className="flex min-w-0 flex-1 flex-col border-b-2 border-[#b5b5b5]">
      <Tabs />
      <section className="grid min-h-0 flex-1 grid-cols-[53px_minmax(0,1fr)_34px] grid-rows-[56px_minmax(0,1fr)_33px]">
        <span />
        <TopRuler />
        <span />
        <SideRuler />
        <Drawing />
        <div className="flex flex-col bg-[#eee]">
          <ScrollArrow dir="up" className="h-8" />
          <span className="grow-[287]" />
          <span className="grow-[132] border-2 border-[#c6c6c6] bg-linear-to-r from-white to-[#f0f0f0]" />
          <span className="grow-[499]" />
          <ScrollArrow dir="down" className="h-8" />
        </div>
        <span />
        <div className="col-span-2 flex">
          <ScrollArrow dir="left" className="w-[33px]" />
          <span className="grow-[575]" />
          <span className="grow-[394] border-2 border-[#c6c6c6] bg-linear-to-b from-white to-[#f0f0f0]" />
          <span className="grow-[664]" />
          <ScrollArrow dir="right" className="w-[33px]" />
          <span className="w-[146px] pr-0.5 text-right leading-[34px]">1 &lt; 10</span>
        </div>
      </section>
      <div className="flex h-4 shrink-0 justify-center overflow-hidden"><Grip vertical={false} rows={6} cols={1} /></div>
      <section aria-label="Command history" className="flex h-[92px] shrink-0 border-2 border-[#b9b9b9] bg-white">
        <div className="flex flex-1 flex-col justify-end overflow-hidden pb-2.5 pl-2.5 text-[#2222d2]">
          <p className="h-[33px] leading-[33px]"><i>Command:</i> zoomin</p>
          <p className="h-[33px] leading-[33px]"><i>Command:</i> zoomin</p>
          <p className="h-[33px] leading-[33px]"><i>Command:</i> preferences</p>
        </div>
        <div className="flex w-[34px] flex-col justify-between bg-[#eee]">
          <ScrollArrow dir="up" className="h-8" />
          <ScrollArrow dir="down" className="h-8" />
        </div>
      </section>
      <div className="flex h-[59px] shrink-0 items-center border-l-2 border-[#b9b9b9] pl-0.5 pt-1">
        <label htmlFor="cmd">Command:</label>
        <input id="cmd" className="ml-3 mr-2 h-10 min-w-0 flex-1 bg-white outline-none" />
        <button aria-label="Command options" className="mr-1 flex h-[52px] w-[54px] items-center justify-center rounded-md border-2 border-[#b4b4b4] bg-linear-to-b from-white to-[#ededed]">
          <Icon size={32} box={32}>
            <rect x="2" y="5" width="28" height="22" rx="2" fill="#f8f8f8" stroke="#111" strokeWidth="2" />
            <path d="M2 5h28v9H2z" fill="#111" />
          </Icon>
        </button>
      </div>
    </main>
  );
}

/* ---------- right panels ---------- */

function PanelTitle({ children }) {
  const b = "flex size-6 items-center justify-center rounded-sm border-2 border-[#bbb] bg-[#dedede]";
  return (
    <div className="flex h-[38px] shrink-0 items-center pb-0.5 pl-2 pr-3.5">
      <h2 className="flex-1">{children}</h2>
      <button aria-label="Float" className={`${b} mr-[22px]`}>
        <Icon size={16} box={16}><path d="M5 2h9v10h-3M2 5h8v9H2z" stroke="#777" strokeWidth="2" /></Icon>
      </button>
      <button aria-label="Close panel" className={b}>
        <Icon size={16} box={16}><path d="M2 2l12 12M14 2L2 14" stroke="#666" strokeWidth="2.6" /></Icon>
      </button>
    </div>
  );
}

function Combo({ id, value, disabled, children, className = "", pad = "pl-2.5" }) {
  return (
    <div className={`relative flex min-w-0 flex-1 items-center ${className}`}>
      <select
        id={id}
        disabled={disabled}
        className={`h-full w-full appearance-none rounded-md border-2 bg-linear-to-b from-white to-[#ebebeb] ${pad} ${disabled ? "border-[#c9c9c9] text-[#bdbdbd] opacity-100" : "border-[#adadad] text-[#1c1c1c]"}`}
      >
        <option>{value}</option>
      </select>
      {children}
      <svg width="18" height="10" viewBox="0 0 18 10" className="pointer-events-none absolute right-4" aria-hidden="true">
        <path d="M0 0h18L9 10z" fill={disabled ? "#c2c2c2" : "#555"} />
      </svg>
    </div>
  );
}

function Field({ id, label, children, className = "h-[51px]" }) {
  return (
    <div className={`flex items-center gap-[7px] ${className}`}>
      <label htmlFor={id} className="w-[225px] shrink-0 text-right">{label}</label>
      <div className="flex h-full flex-1 gap-1.5">{children}</div>
    </div>
  );
}

function PropertyEditor() {
  const input = "h-full w-full rounded-md border-2 border-[#b4b4b4] bg-[#eee]";
  return (
    <section aria-label="Property Editor" className="flex h-[787px] shrink-0 flex-col pt-1">
      <PanelTitle>Property Editor</PanelTitle>
      <div className="flex-1 border-2 border-[#bbb] px-[23px] pt-[22px]">
        <div className="flex h-[51px] items-center">
          <label htmlFor="sel" className="w-[156px]">Selection:</label>
          <Combo id="sel" value="No Selection" className="h-full" />
        </div>
        <fieldset disabled className="mt-[17px] text-[#bdbdbd]">
          <legend className="mb-2 leading-[34px]">General Properties</legend>
          <div className="flex flex-col gap-1.5 rounded-sm border-2 border-[#d2d2d2] bg-[#ebebeb] py-[19px] pl-2 pr-5">
            <Field id="p-layer" label="Layer:">
              <Combo id="p-layer" value="" disabled className="h-full" />
              <button aria-label="Layer menu" className="flex h-full w-[56px] items-center justify-center rounded-md border-2 border-[#c9c9c9] bg-linear-to-b from-white to-[#ebebeb]">
                <Icon size={32} box={32}><path d="M3 6h26M3 16h26M3 26h26" stroke="#a6a6a6" strokeWidth="4" strokeLinecap="round" /></Icon>
              </button>
            </Field>
            <Field id="p-color" label="Color:">
              <Combo id="p-color" value="By Layer" disabled className="h-full" pad="pl-[57px]">
                <span className="pointer-events-none absolute left-3.5 h-6 w-[38px] border-2 border-[#555] bg-white" />
              </Combo>
            </Field>
            <Field id="p-lw" label="Lineweight:" className="h-[56px]">
              <Combo id="p-lw" value="By Layer" disabled className="h-full" pad="pl-[57px]">
                <span className="pointer-events-none absolute left-3.5 h-0.5 w-[38px] bg-[#555]" />
              </Combo>
            </Field>
            <Field id="p-lt" label="Linetype:">
              <Combo id="p-lt" value="By Layer" disabled className="h-full" pad="pl-2.5 pb-2" />
            </Field>
            <Field id="p-ls" label="Linetype Scale:"><input id="p-ls" className={input} /></Field>
            <Field id="p-do" label="Draw Order:"><input id="p-do" className={input} /></Field>
            <Field id="p-h" label="Handle:"><input id="p-h" className={input} /></Field>
          </div>
        </fieldset>
      </div>
    </section>
  );
}

function Eye({ grey }) {
  const c = grey ? "#b2b2b2" : "#000";
  return (
    <svg width="36" height="28" viewBox="0 0 36 28" className="block" aria-hidden="true">
      <path d="M0 8Q8 0 19 0q9 1 12 6l5 7-4 2q-5 11-15 13Q6 25 4 19L1 14l2-4z" fill={c} />
      <path d="M8 13q2 8 10 9 8-1 11-9-1-3-4-4" fill="none" stroke="#fff" strokeWidth="2.2" />
      <path d="M11 11q0 8 7 8t7-8" fill={c} />
      <path d="M12 8q-2 8 5 9 5-1 4-5" fill="none" stroke="#fff" strokeWidth="1.5" />
    </svg>
  );
}

function Pencil() {
  return (
    <Icon size={36} box={36}>
      <path d="M1 34l4-11L26 4l6 5-19 21z" fill="#c99238" stroke="#8a6420" strokeWidth="1" />
      <path d="M6 24L27 5l3 2L9 27z" fill="#ebc070" />
      <path d="M26 4l3-3q5-1 6 5l-3 3z" fill="#e83a30" />
      <path d="M1 34l4-10 7 6z" fill="#dcc9a4" />
      <path d="M1 34l2-4 3 2z" fill="#222" />
    </Icon>
  );
}

function Lock() {
  return (
    <svg width="24" height="34" viewBox="0 0 24 34" className="block" aria-hidden="true">
      <path d="M4 18V10a8 8 0 0 1 16 0v8" fill="none" stroke="#c6c6c6" strokeWidth="3" />
      <rect x="1" y="16" width="22" height="17" fill="#b3b3b3" />
    </svg>
  );
}

const LAYERS = [
  ["0", "bg-white"], ["aux_iso", "bg-[#ff00ff]"], ["border", "bg-white"], ["center", "bg-[#ff0000]"], ["defpoints", "bg-white"],
  ["dimensions", "bg-[#4a6ebe]"], ["hatch", "bg-white"], ["hidden", "bg-white"], ["revision", "bg-white"], ["thin", "bg-white"],
];

function LayerList() {
  const btn = "flex flex-1 items-center justify-center rounded-md border-2 border-[#c0c0c0] bg-linear-to-b from-white to-[#ececec]";
  return (
    <section aria-label="Layer List" className="flex min-h-0 flex-1 flex-col">
      <div className="flex h-[14px] shrink-0 justify-center overflow-hidden"><Grip vertical={false} rows={6} cols={1} /></div>
      <PanelTitle>Layer List</PanelTitle>
      <div className="flex h-[56px] shrink-0 pr-0.5">
        <button aria-label="Show all layers" className={btn}><Eye /></button>
        <button aria-label="Hide all layers" className={btn}><Eye grey /></button>
        <button aria-label="Add layer" className={btn}>
          <Icon size={30} box={30}><path d="M15 1v28M1 15h28" stroke="#8a1a10" strokeWidth="8" /><path d="M15 2v26M2 15h26" stroke="#f20d0d" strokeWidth="5.5" /></Icon>
        </button>
        <button aria-label="Remove layer" className={btn}>
          <Icon size={30} box={30}><path d="M1 15h28" stroke="#8a1a10" strokeWidth="8" /><path d="M2 15h26" stroke="#f20d0d" strokeWidth="5.5" /></Icon>
        </button>
        <button aria-label="Edit layer" className={btn}><Pencil /></button>
      </div>
      <div className="flex min-h-0 flex-1 overflow-hidden border-2 border-r-4 border-[#bbb] bg-white">
        <ul className="h-0 flex-1">
          {LAYERS.map(([name, color], i) => (
            <li key={name} className="flex h-[43px] items-center pl-[54px] pr-3.5">
              <span className={`mt-1 h-6 w-[39px] border-2 border-[#222] ${color}`} />
              <span className="ml-3.5 flex-1">{name}</span>
              {name === "defpoints" && <span className="mr-4"><Pencil /></span>}
              <button aria-label={`Visibility of ${name}`}><Eye grey={i === 1} /></button>
              <button aria-label={`Lock ${name}`} className="ml-[22px] mt-0.5"><Lock /></button>
            </li>
          ))}
        </ul>
        <div className="flex w-[34px] flex-col bg-[#eee]">
          <ScrollArrow dir="up" className="h-8" />
          <span className="grow-[245] border-2 border-[#c6c6c6] bg-linear-to-r from-white to-[#f0f0f0]" />
          <span className="grow-[108]" />
          <ScrollArrow dir="down" className="h-8" />
        </div>
      </div>
    </section>
  );
}

function WinIcon({ children }) {
  return (
    <Icon size={52} box={52}>
      <rect x="1" y="1" width="50" height="50" rx="2" fill="#fff" stroke="#a9a9a9" strokeWidth="2" />
      <rect x="1" y="0" width="50" height="10" fill="#000" />
      <rect x="2" y="1" width="6" height="7" fill="#ddd" />
      {children}
    </Icon>
  );
}

function SideTool({ label, on, children }) {
  return (
    <button
      aria-label={label}
      className={
        on
          ? "flex h-[71px] w-[70px] items-center justify-center border-2 border-[#8a8a8a] bg-linear-to-b from-[#9f9f9f] to-[#e6e6e6]"
          : "flex h-[71px] w-[70px] items-center justify-center"
      }
    >
      <WinIcon>{children}</WinIcon>
    </button>
  );
}

function SideBar() {
  const sep = <span aria-hidden="true" className="my-2 h-0.5 w-10 bg-[#d0d0d0]" />;
  return (
    <aside aria-label="Panels" className="flex w-[88px] shrink-0 flex-col items-center border-l-2 border-[#b5b5b5] bg-linear-to-r from-[#fafafa] to-[#ececec] pr-1 pt-2">
      <Grip vertical={false} rows={6} />
      <SideTool label="Book" on>
        <path d="M14 24l12-9 4 2v18l-12 9-4-2z" fill="#8f8f8f" stroke="#6a6a6a" />
        <path d="M25 42V30l11-14v13z" fill="#fbd9d9" stroke="#ff7d7d" strokeWidth="1.5" />
      </SideTool>
      <SideTool label="Blocks">
        <rect x="14" y="18" width="19" height="15" fill="#f3ecc8" stroke="#857c55" strokeWidth="1.6" />
        <circle cx="30" cy="31" r="8" fill="#f3ecc8" fillOpacity=".8" stroke="#857c55" strokeWidth="1.6" />
      </SideTool>
      <SideTool label="Viewports"><rect x="10" y="19" width="32" height="20" rx="2" fill="#fafafa" stroke="#b9c9e0" strokeWidth="2" /></SideTool>
      {sep}
      <SideTool label="Properties" on>
        {[17, 27, 38].map((y) => (
          <g key={y}>
            <circle cx="11" cy={y + 1} r="4" fill="#000" />
            <rect x="20" y={y - 2.5} width="26" height="7" fill="#e6e6e6" stroke="#777" strokeWidth="1.6" />
          </g>
        ))}
      </SideTool>
      <SideTool label="Filter">
        <path d="M13 18h26L30 30v12l-6-3V30z" fill="#a9a9a9" stroke="#888" />
        <ellipse cx="26" cy="18" rx="13" ry="3" fill="#555" />
      </SideTool>
      <SideTool label="Library">
        <path d="M8 30h36" stroke="#ff9a9a" strokeWidth="1.4" />
        <path d="M14 17v26l6-6h5V23h-5z" fill="#ddd" stroke="#555" strokeWidth="1.6" />
        <rect x="26" y="22" width="14" height="16" rx="2" fill="#4c4c4c" />
      </SideTool>
      {sep}
      <SideTool label="Command Line" on>
        <path d="M5 16h24M5 22h22M5 28h28M5 34h32" stroke="#999" strokeWidth="2.4" strokeDasharray="9 2" />
        <path d="M1 41h50v9H1z" fill="#ddd" stroke="#888" />
        <path d="M4 46h8M18 46h28" stroke="#777" strokeWidth="3" strokeDasharray="6 1" />
      </SideTool>
      <SideTool label="Clipboard">
        <rect x="15" y="16" width="23" height="27" rx="2" fill="#e8e8e8" stroke="#c08a3c" strokeWidth="3" />
        <path d="M20 14h13v6H20z" fill="#999" />
        <path d="M20 25h12M20 29h12M20 33h12" stroke="#ccc" strokeWidth="2" />
      </SideTool>
    </aside>
  );
}

/* ---------- status bar ---------- */

function StatusBar() {
  return (
    <footer className="flex h-[109px] shrink-0 items-center pt-0.5">
      <div className="flex w-[470px] flex-col gap-4 pl-1.5 pt-0.5 leading-[34px]">
        <p>-2.1861,2.7697</p>
        <p>@-2.1861,2.7697</p>
      </div>
      <div className="flex h-[93px] w-[473px] flex-col justify-center gap-4 border-l-2 border-[#b5b5b5] pl-1.5 pt-0.5 leading-[34px]">
        <p>3.5285&lt;128°</p>
        <p>@3.5285&lt;128°</p>
      </div>
      <Grip cols={1} />
      <p className="ml-6">Select entity or region</p>
      <svg width="46" height="78" viewBox="0 0 46 78" className="ml-[38px] mr-[382px]" fill="none" role="img" aria-label="Mouse">
        <rect x="2" y="2" width="42" height="74" rx="21" fill="#fff" stroke="#8c8c8c" strokeWidth="2" />
        <path d="M3 38q20-7 40 0M23 3v8M23 28v7" stroke="#666" strokeWidth="3.6" />
        <rect x="19" y="9" width="8" height="19" rx="4" fill="#e8e8e8" stroke="#6e6e6e" strokeWidth="2.4" />
      </svg>
      <Grip cols={1} />
      <p className="ml-0.5 w-[592px]">No entities selected.</p>
      <Grip cols={1} />
      <span className="flex-1" />
      <Icon size={28} box={28} className="self-end">
        {[[21, 3], [21, 11], [13, 11], [21, 19], [13, 19], [5, 19]].map(([x, y]) => (
          <circle key={`${x}-${y}`} cx={x} cy={y} r="1.4" fill="#a6a6a6" />
        ))}
      </Icon>
    </footer>
  );
}

export default function App() {
  return (
    <div className={`flex h-screen flex-col overflow-hidden bg-[#2d2d2d] ${FONT} text-[28px] text-[#1e1e1e]`}>
      <Gradients />
      <TopBar />
      <div className="flex min-h-0 flex-1">
        <Dock />
        <div className="flex min-w-0 flex-1 bg-linear-to-b from-[#363636] to-[#2b2b2b] pb-[91px] pr-[69px]">
          <div className="flex min-w-0 flex-1 flex-col rounded-t-[26px] bg-[#efefef] shadow-[0_8px_30px_rgba(0,0,0,0.5)]">
            <TitleBar />
            <MenuBar />
            <MainToolbar />
            <OptionsToolbar />
            <div className="flex min-h-0 flex-1">
              <Palette />
              <Center />
              <div className="flex w-[14px] shrink-0 items-center justify-center"><Grip cols={1} /></div>
              <div className="flex w-[613px] shrink-0 flex-col">
                <PropertyEditor />
                <LayerList />
              </div>
              <SideBar />
            </div>
            <StatusBar />
          </div>
        </div>
      </div>
    </div>
  );
}
